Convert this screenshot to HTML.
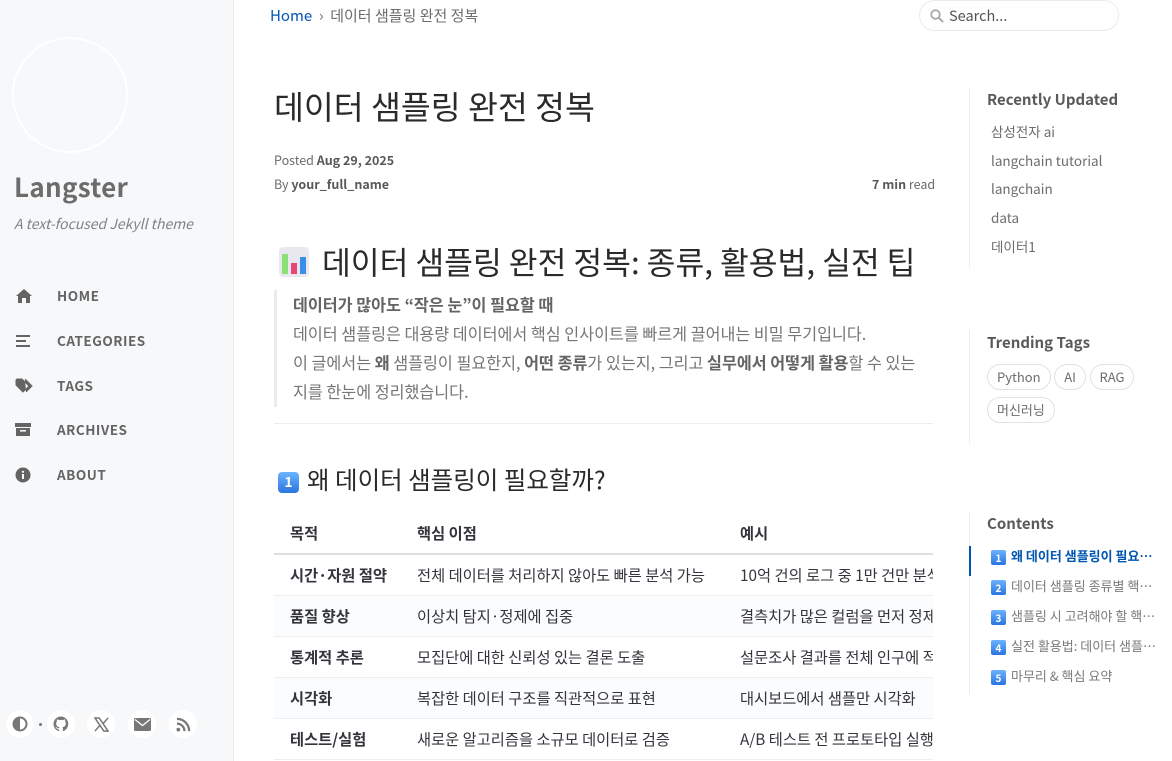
<!DOCTYPE html>
<html><head><meta charset="utf-8"><style>
*{box-sizing:border-box;margin:0;padding:0}
body{width:1172px;height:761px;overflow:hidden;background:#fff;font-family:"Noto Sans CJK KR","Liberation Sans",sans-serif;color:#34343c;position:relative}
.side{position:absolute;left:0;top:0;width:234px;height:761px;background:#f6f8fa;border-right:1px solid #eceef0}
.avatar{position:absolute;left:12px;top:37px;width:116px;height:116px;border-radius:50%;border:2px solid #fff}
.title{position:absolute;left:14px;top:168px;font-size:26px;font-weight:bold;color:#6c6c6c;letter-spacing:.3px;line-height:38px}
.sub{position:absolute;left:14px;top:214px;font-size:14px;font-style:italic;color:#828282;line-height:20px}
.nav{position:absolute;left:0;width:234px;height:20px;font-size:13.5px;font-weight:600;color:#646464;letter-spacing:.5px;line-height:18px}
.nav svg{position:absolute;left:15px;top:2px}
.nav span{position:absolute;left:57px;top:0}
.ic{position:absolute;top:710px;width:28px;height:28px;border-radius:50%;background:#fff;display:flex;align-items:center;justify-content:center}
.crumb{position:absolute;left:270px;top:5px;font-size:15px;color:#6c6c6c;line-height:22px}
.crumb a{color:#0056b2}
.search{position:absolute;left:919px;top:0;width:200px;height:31px;border:1px solid #e9ecef;border-radius:16px;font-size:14.5px;color:#555;padding:4px 0 0 29px}
h1{position:absolute;left:274px;top:83px;font-size:32.5px;font-weight:400;color:#2a2a2a;line-height:46px}
.meta{position:absolute;left:274px;font-size:12.5px;color:#6c6c6c;line-height:18px}
.meta b{color:#585858}
h2{position:absolute;left:278px;top:240px;font-size:31.3px;font-weight:400;color:#2a2a2a;white-space:nowrap;line-height:44px}
.bq{position:absolute;left:274px;top:290px;width:670px;height:117px;border-left:3px solid #e9ecef;padding-left:16px;font-size:16.2px;color:#757575;line-height:29px;white-space:nowrap}
.bq b{color:#646464}
hr{position:absolute;left:274px;top:423px;width:659px;border:0;border-top:1px solid #ececec}
h3{position:absolute;left:278px;top:462px;font-size:24.5px;font-weight:400;color:#2a2a2a;line-height:36px}
.num{display:inline-block;width:21px;height:21px;border-radius:4px;background:linear-gradient(#6cb3ff,#2a75e0);color:#fff;font-size:14px;text-align:center;line-height:21px;font-weight:bold;vertical-align:2px;margin-right:8px}
.tbl{position:absolute;left:274px;top:513px;width:659px;height:248px;overflow:hidden}
table{border-collapse:collapse;width:760px;font-size:15.3px;color:#34343c}
td,th{height:41px;text-align:left;padding-left:16px;white-space:nowrap;border-bottom:1px solid #eceef0}
th{font-weight:600;border-bottom:2px solid #dcdfe2;height:41px}
td:first-child{font-weight:bold}
tr:nth-child(odd) td{background:#fbfcfd}
.rp{position:absolute;left:969px;border-left:1px solid #ececec}
.rp h4{font-size:15px;font-weight:600;color:#5a5a5a;margin-left:17px;line-height:22px}
.rp .li{font-size:13.5px;color:#6c6c6c;margin-left:21px;height:28.7px;line-height:20px}
.tag{display:inline-block;border:1px solid #dee2e6;border-radius:14px;font-size:13px;color:#6c6c6c;padding:3px 9px;margin:0 0 6px 0;line-height:18px}
.toc{font-size:13px;color:#7a7a7a;margin-left:21px;height:30px;line-height:20px;white-space:nowrap}
.toc .num{width:15px;height:15px;font-size:10px;line-height:15px;margin-right:5px;vertical-align:-1px;border-radius:2px}
</style></head><body>
<div class="side">
<div class="avatar"></div>
<div class="title">Langster</div>
<div class="sub">A text-focused Jekyll theme</div>
<div class="nav" style="top:286px"><svg width="18" height="16" viewBox="0 0 18 16"><path d="M9 1L1 8h2v7h4v-5h4v5h4V8h2z" fill="#646464"/></svg><span>HOME</span></div>
<div class="nav" style="top:331px"><svg width="16" height="16" viewBox="0 0 16 16"><path d="M1 3h14M1 8h10M1 13h14" stroke="#646464" stroke-width="2"/></svg><span>CATEGORIES</span></div>
<div class="nav" style="top:376px"><svg width="18" height="16" viewBox="0 0 18 16"><path d="M1 2v5l7 7 6-6-7-7H2zM10 1l7 7-6 6" fill="#646464" stroke="#646464"/></svg><span>TAGS</span></div>
<div class="nav" style="top:420px"><svg width="16" height="16" viewBox="0 0 16 16"><rect x="0" y="1" width="16" height="4" fill="#646464"/><path d="M1 6h14v8H1z" fill="#646464"/><rect x="5" y="8" width="6" height="1.6" fill="#f6f8fa"/></svg><span>ARCHIVES</span></div>
<div class="nav" style="top:465px"><svg width="16" height="16" viewBox="0 0 16 16"><circle cx="8" cy="8" r="7.5" fill="#646464"/><rect x="7" y="7" width="2" height="5" fill="#fff"/><circle cx="8" cy="4.8" r="1.1" fill="#fff"/></svg><span>ABOUT</span></div>
<div class="ic" style="left:6px"><svg width="16" height="16" viewBox="0 0 16 16"><circle cx="8" cy="8" r="6.5" fill="none" stroke="#777" stroke-width="2"/><path d="M8 1.5a6.5 6.5 0 0 0 0 13z" fill="#777"/></svg></div>
<div style="position:absolute;left:39px;top:723px;width:3px;height:3px;border-radius:50%;background:#777"></div>
<div class="ic" style="left:47px"><svg width="16" height="16" viewBox="0 0 16 16"><path d="M8 .5a7.5 7.5 0 0 0-2.4 14.6c.4 0 .5-.2.5-.4v-1.4c-2.1.5-2.5-1-2.5-1-.4-.9-.9-1.1-.9-1.1-.7-.5 0-.5 0-.5.8 0 1.2.8 1.2.8.7 1.2 1.8.8 2.2.6 0-.5.3-.8.5-1-1.7-.2-3.4-.8-3.4-3.7 0-.8.3-1.5.8-2-.1-.2-.3-1 .1-2 0 0 .6-.2 2 .8a7 7 0 0 1 3.8 0c1.4-1 2-.8 2-.8.4 1 .2 1.8.1 2 .5.5.8 1.2.8 2 0 2.9-1.8 3.5-3.4 3.7.3.2.5.7.5 1.4v2.1c0 .2.1.5.5.4A7.5 7.5 0 0 0 8 .5z" fill="#777"/></svg></div>
<div class="ic" style="left:87px"><svg width="15" height="15" viewBox="0 0 16 16"><path d="M1 1h4.5l9.5 14h-4.5zM15 1L9.3 7.5M1 15l5.7-6.5" stroke="#777" stroke-width="1.6" fill="none"/></svg></div>
<div class="ic" style="left:128px"><svg width="17" height="13" viewBox="0 0 17 13"><rect width="17" height="13" rx="1.5" fill="#777"/><path d="M1 1.5l7.5 6 7.5-6" stroke="#fff" stroke-width="1.3" fill="none"/></svg></div>
<div class="ic" style="left:169px"><svg width="15" height="15" viewBox="0 0 16 16"><circle cx="2.5" cy="13.5" r="2" fill="#777"/><path d="M1 7a8 8 0 0 1 8 8M1 2a13 13 0 0 1 13 13" stroke="#777" stroke-width="2.4" fill="none"/></svg></div>
</div>
<div class="crumb"><a>Home</a> &nbsp;›&nbsp; 데이터 샘플링 완전 정복</div>
<div class="search"><svg style="position:absolute;left:10px;top:8px" width="14" height="14" viewBox="0 0 14 14"><circle cx="5.5" cy="5.5" r="4.3" stroke="#aaa" stroke-width="1.8" fill="none"/><path d="M8.7 8.7L13 13" stroke="#aaa" stroke-width="2"/></svg>Search...</div>
<h1>데이터 샘플링 완전 정복</h1>
<div class="meta" style="top:151px">Posted <b>Aug 29, 2025</b></div>
<div class="meta" style="top:175px">By <b>your_full_name</b></div>
<div class="meta" style="top:175px;left:872px"><b>7 min</b> read</div>
<h2><svg width="32" height="32" viewBox="0 0 32 32" style="vertical-align:-4px;margin-right:12px"><rect x="1" y="1" width="30" height="30" rx="4" fill="#e8e8ee"/><rect x="4" y="8" width="6" height="20" fill="#8be07a"/><rect x="13" y="17" width="6" height="11" fill="#e8457a"/><rect x="22" y="11" width="6" height="17" fill="#3a8ee8"/></svg>데이터 샘플링 완전 정복: 종류, 활용법, 실전 팁</h2>
<div class="bq"><b>데이터가 많아도 “작은 눈”이 필요할 때</b><br>데이터 샘플링은 대용량 데이터에서 핵심 인사이트를 빠르게 끌어내는 비밀 무기입니다.<br>이 글에서는 <b>왜</b> 샘플링이 필요한지, <b>어떤 종류</b>가 있는지, 그리고 <b>실무에서 어떻게 활용</b>할 수 있는<br>지를 한눈에 정리했습니다.</div>
<hr>
<h3><span class="num">1</span>왜 데이터 샘플링이 필요할까?</h3>
<div class="tbl"><table>
<tr><th style="width:127px">목적</th><th style="width:323px">핵심 이점</th><th>예시</th></tr>
<tr><td>시간·자원 절약</td><td>전체 데이터를 처리하지 않아도 빠른 분석 가능</td><td>10억 건의 로그 중 1만 건만 분석</td></tr>
<tr><td>품질 향상</td><td>이상치 탐지·정제에 집중</td><td>결측치가 많은 컬럼을 먼저 정제</td></tr>
<tr><td>통계적 추론</td><td>모집단에 대한 신뢰성 있는 결론 도출</td><td>설문조사 결과를 전체 인구에 적용</td></tr>
<tr><td>시각화</td><td>복잡한 데이터 구조를 직관적으로 표현</td><td>대시보드에서 샘플만 시각화</td></tr>
<tr><td>테스트/실험</td><td>새로운 알고리즘을 소규모 데이터로 검증</td><td>A/B 테스트 전 프로토타입 실행</td></tr>
</table></div>
<div class="rp" style="top:87px;height:181px;padding-top:2px"><h4 style="margin-bottom:10px">Recently Updated</h4>
<div class="li">삼성전자 ai</div><div class="li">langchain tutorial</div><div class="li">langchain</div><div class="li">data</div><div class="li">데이터1</div></div>
<div class="rp" style="top:330px;height:114px;padding-top:2px"><h4 style="margin-bottom:9px">Trending Tags</h4>
<div style="margin-left:17px;width:180px"><span class="tag">Python</span> <span class="tag">AI</span> <span class="tag">RAG</span> <span class="tag">머신러닝</span></div></div>
<div class="rp" style="top:511px;height:183px;padding-top:2px"><h4 style="margin-bottom:11px">Contents</h4>
<div class="toc" style="color:#0056b2;font-weight:600;border-left:2px solid #0056b2;margin-left:-1px;padding-left:20px"><span class="num">1</span>왜 데이터 샘플링이 필요…</div>
<div class="toc"><span class="num">2</span>데이터 샘플링 종류별 핵…</div>
<div class="toc"><span class="num">3</span>샘플링 시 고려해야 할 핵…</div>
<div class="toc"><span class="num">4</span>실전 활용법: 데이터 샘플…</div>
<div class="toc"><span class="num">5</span>마무리 &amp; 핵심 요약</div></div>
</body></html>
